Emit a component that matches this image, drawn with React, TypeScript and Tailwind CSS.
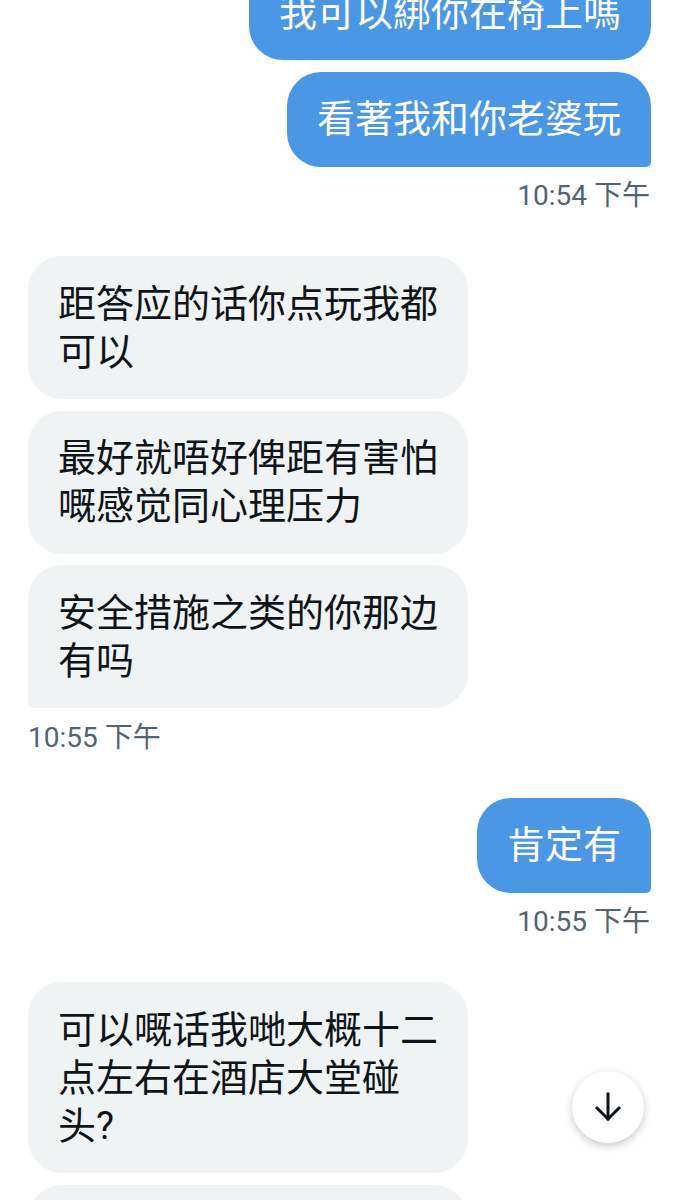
import React from "react";

type Side = "left" | "right";

const cjk = "font-['Roboto','Noto_Sans_CJK_SC',sans-serif]";

function Bubble({ text, side, last }: { text: string; side: Side; last?: boolean }) {
  const base =
    "w-fit max-w-[440px] rounded-[34px] px-[30px] py-[23.5px] text-[38px] leading-[48px] break-all " + cjk;
  const color =
    side === "right"
      ? "self-end bg-[#4a97e5] text-white"
      : "self-start bg-[#eff3f4] text-[#0f1419]";
  const corner = last ? (side === "right" ? "rounded-br-[5px]" : "rounded-bl-[5px]") : "";
  return <div className={`${base} ${color} ${corner}`}>{text}</div>;
}

function Stamp({ text, side }: { text: string; side: Side }) {
  return (
    <div
      className={`mt-[2px] text-[28px] leading-[32px] text-[#536471] ${cjk} ${
        side === "right" ? "self-end pr-[1px]" : "self-start"
      }`}
    >
      {text}
    </div>
  );
}

function Group({
  side,
  messages,
  stamp,
  lastSquare = true,
  children,
}: {
  side: Side;
  messages: string[];
  stamp?: string;
  lastSquare?: boolean;
  children?: React.ReactNode;
}) {
  return (
    <div className="flex flex-col gap-[11.5px]">
      {messages.map((m, i) => (
        <Bubble key={i} text={m} side={side} last={lastSquare && i === messages.length - 1} />
      ))}
      {children}
      {stamp && <Stamp text={stamp} side={side} />}
    </div>
  );
}

export default function App() {
  return (
    <div className="relative h-[1200px] w-full overflow-hidden bg-white">
      <div className="mt-[-35px] flex flex-col gap-[44px] px-[28px]">
        <Group side="right" messages={["我可以綁你在椅上嗎", "看著我和你老婆玩"]} stamp="10:54 下午" />
        <Group
          side="left"
          messages={["距答应的话你点玩我都可以", "最好就唔好俾距有害怕嘅感觉同心理压力", "安全措施之类的你那边有吗"]}
          stamp="10:55 下午"
        />
        <Group side="right" messages={["肯定有"]} stamp="10:55 下午" />
        <Group side="left" lastSquare={false} messages={["可以嘅话我哋大概十二点左右在酒店大堂碰头?"]}>
          <div className="h-[95px] w-[440px] self-start rounded-[34px] bg-[#eff3f4]" />
        </Group>
      </div>
      <button
        type="button"
        className="absolute bottom-[57px] right-[35px] flex h-[72px] w-[72px] items-center justify-center rounded-full bg-white shadow-[0_3px_8px_rgba(0,0,0,0.22)]"
      >
        <svg width="32" height="32" viewBox="0 0 32 32" fill="none" stroke="#0f1419" strokeWidth="3" strokeLinecap="square">
          <path d="M16 3v25" />
          <path d="M4 16l12 12 12-12" strokeLinecap="butt" strokeLinejoin="miter" />
        </svg>
      </button>
    </div>
  );
}
